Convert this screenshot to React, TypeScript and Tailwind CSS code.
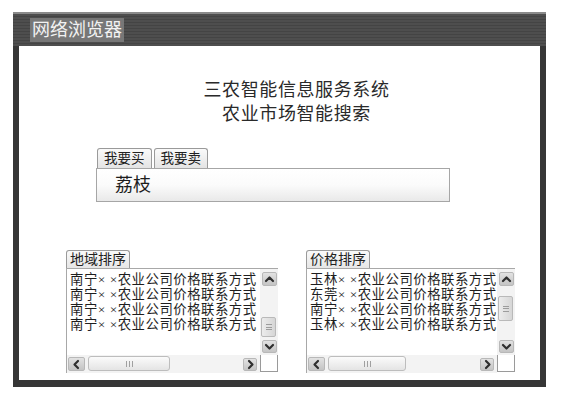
import React from "react";

const FONT = "font-['Liberation_Serif','Noto_Sans_CJK_SC',serif]";

function Chevron({ dir }: { dir: "up" | "down" | "left" | "right" }) {
  const pts = {
    up: "2,7 5.5,3.5 9,7",
    down: "2,4 5.5,7.5 9,4",
    left: "7,2 3.5,5.5 7,9",
    right: "4,2 7.5,5.5 4,9",
  }[dir];
  return (
    <svg width="11" height="11" viewBox="0 0 11 11">
      <polyline points={pts} fill="none" stroke="#2f2f2f" strokeWidth="2.2" strokeLinecap="round" strokeLinejoin="round" />
    </svg>
  );
}

function ArrowBtn({ dir, className }: { dir: "up" | "down" | "left" | "right"; className: string }) {
  return (
    <div className={`flex items-center justify-center rounded-[2px] bg-gradient-to-b from-[#e2e2e2] to-[#c4c4c4] border border-[#b8b8b8] ${className}`}>
      <Chevron dir={dir} />
    </div>
  );
}

function ListPanel({
  title,
  rows,
  thumbTop,
  thumbH,
  hThumbLeft,
  hThumbW,
  width,
}: {
  title: string;
  rows: string[];
  thumbTop: number;
  thumbH: number;
  hThumbLeft: number;
  hThumbW: number;
  width: string;
}) {
  return (
    <div className={`${width} flex flex-col`}>
      <div className="self-start h-[18px] px-[3px] border border-b-0 border-[#9a9a9a] rounded-t-[3px] bg-gradient-to-b from-[#fafafa] to-[#e6e6e6] text-[14px] leading-[17px] text-[#222]">
        {title}
      </div>
      <div className="flex h-[87px] border-t border-l border-[#a8a8a8]">
        <div className="flex-1 overflow-hidden whitespace-nowrap pl-[3px] pt-[3px] text-[13.4px] leading-[15px] tracking-[0.5px] text-[#1e1e1e]">
          {rows.map((r, i) => (
            <div key={i}>{r}</div>
          ))}
        </div>
        <div className="relative w-[18px] bg-[#f3f3f3] flex flex-col items-center pt-[3px] pb-[2px]">
          <ArrowBtn dir="up" className="w-[15px] h-[14px]" />
          <div className="flex-1" />
          <ArrowBtn dir="down" className="w-[15px] h-[13px]" />
          <div
            className="absolute left-[1px] w-[15px] rounded-[2px] border border-[#b9b9b9] bg-gradient-to-r from-[#ececec] to-[#d6d6d6] flex items-center justify-center"
            style={{ top: thumbTop, height: thumbH }}
          >
            <div className="w-[6px] h-[6px] border-y border-[#9c9c9c] flex items-center">
              <div className="w-full h-px bg-[#9c9c9c]" />
            </div>
          </div>
        </div>
      </div>
      <div className="flex h-[18px]">
        <div className="relative flex-1 flex items-center bg-[#f3f3f3] border-l border-[#a8a8a8] pr-[3px]">
          <ArrowBtn dir="left" className="w-[17px] h-[14px] ml-[1px]" />
          <div className="flex-1" />
          <ArrowBtn dir="right" className="w-[14px] h-[13px]" />
          <div
            className="absolute top-[1px] h-[15px] rounded-[3px] border border-[#bdbdbd] bg-gradient-to-b from-[#fbfbfb] to-[#e4e4e4] flex items-center justify-center"
            style={{ left: hThumbLeft, width: hThumbW }}
          >
            <div className="flex gap-[2px]">
              <div className="w-px h-[6px] bg-[#a0a0a0]" />
              <div className="w-px h-[6px] bg-[#a0a0a0]" />
              <div className="w-px h-[6px] bg-[#a0a0a0]" />
            </div>
          </div>
        </div>
        <div className="w-[18px] h-[19px] -mt-[2px] border border-[#9a9a9a] bg-white" />
      </div>
    </div>
  );
}

export default function App() {
  const row = "× ×农业公司价格联系方式";
  return (
    <div className={`w-[566px] h-[399px] bg-white pt-[12px] pl-[13px] ${FONT}`}>
      <div className="w-[533px] h-[375px] flex flex-col">
        <div className="h-[34px] border-t-2 border-[#8a8a8a] bg-[repeating-linear-gradient(180deg,#4e4e4e_0px,#4e4e4e_2px,#444_2px,#444_3px)] pl-[17px] pt-[4px]">
          <div className="inline-block h-[24px] px-[2px] bg-[#777] text-[#f2f2f2] text-[18px] leading-[24px]">网络浏览器</div>
        </div>
        <div className="flex-1 border-x-[6px] border-b-[7px] border-[#363636] bg-white">
          <div className="pt-[32px] pl-[34px] text-center text-[18px] leading-[24px] text-[#2a2a2a] tracking-[0.6px]">
            <div>三农智能信息服务系统</div>
            <div>农业市场智能搜索</div>
          </div>

          <div className="mt-[22px] ml-[77px] w-[354px]">
            <div className="flex gap-[2px] pl-[1px]">
              <div className="h-[20px] px-[6px] border border-b-0 border-[#9a9a9a] rounded-t-[3px] bg-gradient-to-b from-[#fafafa] to-[#e4e4e4] text-[13.5px] leading-[19px] text-[#222]">我要买</div>
              <div className="h-[20px] px-[6px] border border-b-0 border-[#9a9a9a] rounded-t-[3px] bg-gradient-to-b from-[#fafafa] to-[#e4e4e4] text-[13.5px] leading-[19px] text-[#222]">我要卖</div>
            </div>
            <div className="h-[34px] border border-[#a6a6a6] bg-gradient-to-b from-white via-[#fbfbfb] to-[#e9e9e9] pl-[18px] text-[18px] leading-[32px] text-[#1e1e1e]">
              荔枝
            </div>
          </div>

          <div className="mt-[48px] ml-[47px] flex gap-[28px]">
            <ListPanel
              title="地域排序"
              width="w-[212px]"
              rows={["南宁" + row, "南宁" + row, "南宁" + row, "南宁" + row]}
              thumbTop={48}
              thumbH={20}
              hThumbLeft={21}
              hThumbW={82}
            />
            <ListPanel
              title="价格排序"
              width="w-[209px]"
              rows={["玉林" + row, "东莞" + row, "南宁" + row, "玉林" + row]}
              thumbTop={27}
              thumbH={25}
              hThumbLeft={21}
              hThumbW={78}
            />
          </div>
        </div>
      </div>
    </div>
  );
}
